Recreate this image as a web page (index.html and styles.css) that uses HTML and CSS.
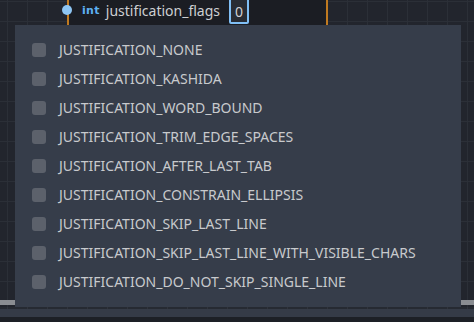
FILE: index.html
```html
<!DOCTYPE html>
<html>
<head>
<meta charset="utf-8">
<link rel="stylesheet" href="styles.css">
</head>
<body>
<div class="app">
  <div class="graph">
    <div class="node">
      <div class="node-row">
        <span class="port"></span>
        <span class="type">int</span>
        <span class="label">justification_flags</span>
        <span class="value">0</span>
      </div>
    </div>
    <div class="node-bottom left"></div>
    <div class="node-bottom right"></div>
    <div class="popup">
      <div class="item"><span class="check"></span><span class="text">JUSTIFICATION_NONE</span></div>
      <div class="item"><span class="check"></span><span class="text">JUSTIFICATION_KASHIDA</span></div>
      <div class="item"><span class="check"></span><span class="text">JUSTIFICATION_WORD_BOUND</span></div>
      <div class="item"><span class="check"></span><span class="text">JUSTIFICATION_TRIM_EDGE_SPACES</span></div>
      <div class="item"><span class="check"></span><span class="text">JUSTIFICATION_AFTER_LAST_TAB</span></div>
      <div class="item"><span class="check"></span><span class="text">JUSTIFICATION_CONSTRAIN_ELLIPSIS</span></div>
      <div class="item"><span class="check"></span><span class="text">JUSTIFICATION_SKIP_LAST_LINE</span></div>
      <div class="item"><span class="check"></span><span class="text">JUSTIFICATION_SKIP_LAST_LINE_WITH_VISIBLE_CHARS</span></div>
      <div class="item"><span class="check"></span><span class="text">JUSTIFICATION_DO_NOT_SKIP_SINGLE_LINE</span></div>
    </div>
  </div>
  <div class="bottom">
    <div class="bottom-line"></div>
    <div class="bottom-band"></div>
    <div class="bottom-base"></div>
  </div>
</div>
</body>
</html>
```

FILE: styles.css
```css
html, body {
  margin: 0;
  padding: 0;
  background: #1d2026;
}
.app {
  width: 474px;
  height: 322px;
  display: flex;
  flex-direction: column;
  overflow: hidden;
  font-family: "Noto Sans", "DejaVu Sans", sans-serif;
}
.graph {
  position: relative;
  flex: 1;
  background-color: #22252d;
  background-image:
    linear-gradient(to right, #2b2f37 1px, transparent 1px),
    linear-gradient(to bottom, #2b2f37 1px, transparent 1px);
  background-size: 20px 20px;
  background-position: 7px 1px;
}
.node {
  position: absolute;
  left: 67px;
  top: -2px;
  width: 257px;
  height: 40px;
  background: #1b1d23;
  border-left: 2px solid #c07a20;
  border-right: 2px solid #c07a20;
}
.node-row {
  position: relative;
  display: flex;
  align-items: center;
  height: 24px;
  padding-left: 13px;
}
.port {
  position: absolute;
  left: -7px;
  top: 7px;
  width: 10px;
  height: 10px;
  border-radius: 50%;
  background: #8ec5f2;
}
.type {
  font-family: "DejaVu Sans", sans-serif;
  font-size: 11px;
  font-weight: 700;
  color: #5eb1f2;
  letter-spacing: 0.3px;
  margin-right: 6px;
}
.label {
  font-size: 14px;
  color: #cdcfd2;
  margin-right: 9px;
}
.value {
  box-sizing: border-box;
  width: 20px;
  height: 27px;
  margin-top: 1px;
  border: 2px solid #80bff5;
  border-radius: 2px;
  background: #282c34;
  color: #d0d2d5;
  font-size: 14px;
  display: flex;
  align-items: center;
  justify-content: center;
  padding-top: 1px;
}
.node-bottom {
  position: absolute;
  top: 300px;
  height: 5px;
  background: #8a8d92;
}
.node-bottom.left { left: 0; width: 15px; }
.node-bottom.right { left: 461px; width: 13px; }
.popup {
  position: absolute;
  left: 15px;
  top: 25px;
  width: 446px;
  height: 282px;
  box-sizing: border-box;
  padding: 10px 0 11px 17px;
  background: #363d4a;
  display: flex;
  flex-direction: column;
  z-index: 2;
}
.item {
  height: 29px;
  display: flex;
  align-items: center;
}
.check {
  width: 14px;
  height: 14px;
  border-radius: 3px;
  background: #5c616b;
  margin-right: 13px;
  flex-shrink: 0;
}
.text {
  font-size: 14px;
  color: #c8cacd;
  white-space: nowrap;
}
.bottom {
  height: 15px;
  display: flex;
  flex-direction: column;
}
.bottom-line {
  height: 2px;
  background-color: #262a32;
  background-image: linear-gradient(to right, #30343c 1px, transparent 1px);
  background-size: 20px 2px;
  background-position: 7px 0;
}
.bottom-band {
  height: 8px;
  background: #353b47;
}
.bottom-base {
  flex: 1;
  background: #1d2026;
}
```
